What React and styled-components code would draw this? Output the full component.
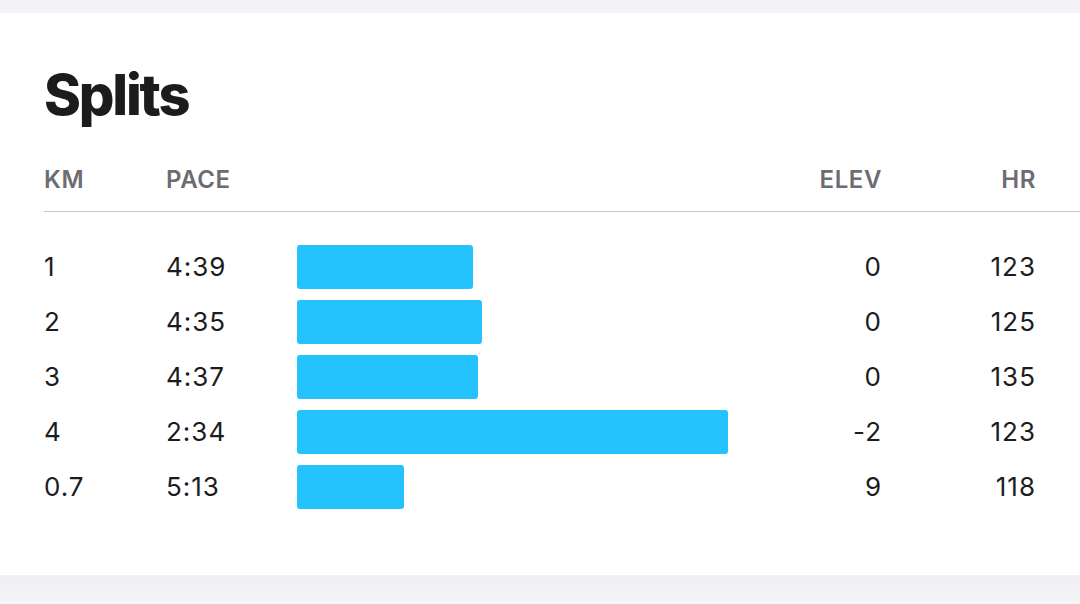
import React from 'react';
import styled, { createGlobalStyle } from 'styled-components';

const GlobalStyle = createGlobalStyle`
  html, body {
    margin: 0;
    padding: 0;
    background: #f2f2f7;
  }

  body {
    font-family: Inter, "Noto Sans", sans-serif;
    -webkit-font-smoothing: antialiased;
  }
`;

const StyledPage = styled.div`
  width: 1080px;
  height: 604px;
  overflow: hidden;
  display: flex;
  flex-direction: column;
  padding-top: 13px;
  box-sizing: border-box;
  background: linear-gradient(to bottom, #f2f2f7 0, #f2f2f7 575px, #efeff4 576px, #f6f6f8 604px);
`;

const StyledCard = styled.section`
  background: #fff;
  height: 562px;
  padding: 48px 0 0 44px;
  box-sizing: border-box;
`;

const StyledTitle = styled.h2`
  margin: 0 0 34px;
  font-family: Inter, sans-serif;
  font-size: 56px;
  font-weight: 800;
  letter-spacing: -2.2px;
  line-height: 68px;
  color: #1c1c1e;
`;

const StyledGrid = styled.div`
  display: grid;
  grid-template-columns: 122px 131px 1fr 112px 154px 44px;
  align-items: center;
`;

const StyledHead = styled(StyledGrid)`
  height: 32px;
  padding-bottom: 16px;
  border-bottom: 1px solid #c8c8cc;
  font-size: 24px;
  font-weight: 600;
  letter-spacing: 0.6px;
  color: #6c6c72;
`;

const StyledBody = styled.div`
  padding-top: 27px;
`;

const StyledRow = styled(StyledGrid)`
  height: 55px;
  font-size: 26px;
  font-weight: 400;
  letter-spacing: 1px;
  color: #1c1c1e;
`;

const StyledCell = styled.div`
  text-align: ${({ $right }) => ($right ? 'right' : 'left')};
  white-space: nowrap;
`;

const StyledBar = styled.div`
  height: 44px;
  border-radius: 3px;
  background: #25c3fd;
`;

const splits = [
  { km: '1', pace: '4:39', bar: 176, elev: '0', hr: '123' },
  { km: '2', pace: '4:35', bar: 185, elev: '0', hr: '125' },
  { km: '3', pace: '4:37', bar: 181, elev: '0', hr: '135' },
  { km: '4', pace: '2:34', bar: 431, elev: '-2', hr: '123' },
  { km: '0.7', pace: '5:13', bar: 107, elev: '9', hr: '118' },
];

const App = () => (
  <>
    <GlobalStyle />
    <StyledPage>
      <StyledCard>
        <StyledTitle>Splits</StyledTitle>
        <StyledHead>
          <StyledCell>KM</StyledCell>
          <StyledCell>PACE</StyledCell>
          <StyledCell />
          <StyledCell $right>ELEV</StyledCell>
          <StyledCell $right>HR</StyledCell>
          <StyledCell />
        </StyledHead>
        <StyledBody>
          {splits.map(split => (
            <StyledRow key={split.km}>
              <StyledCell>{split.km}</StyledCell>
              <StyledCell>{split.pace}</StyledCell>
              <StyledCell>
                <StyledBar style={{ width: `${split.bar}px` }} />
              </StyledCell>
              <StyledCell $right>{split.elev}</StyledCell>
              <StyledCell $right>{split.hr}</StyledCell>
              <StyledCell />
            </StyledRow>
          ))}
        </StyledBody>
      </StyledCard>
    </StyledPage>
  </>
);

export default App;
